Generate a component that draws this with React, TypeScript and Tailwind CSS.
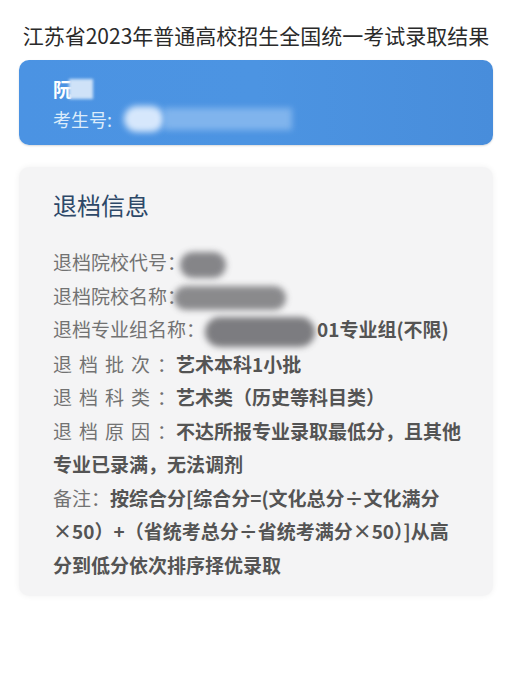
import React from 'react';

const cjk = { fontFamily: '"Noto Sans CJK SC", "Noto Sans", sans-serif' };

// smudge used to hide personal data, like in the screenshot
const Smudge = ({ className }: { className: string }) => (
    <span className={`inline-block align-middle rounded-full blur-[3px] ${className}`} />
);

const Row = ({ children }: { children: React.ReactNode }) => (
    <p className="text-[19px] leading-[33.5px] text-[#727272]">{children}</p>
);

const Val = ({ children }: { children: React.ReactNode }) => (
    <span className="font-bold text-[#545454]">{children}</span>
);

export default function App() {
    return (
        <div className="w-[512px] h-[680px] bg-white px-[19px] pt-[19px]" style={cjk}>
            {/* Title */}
            <h1 className="text-[21px] leading-[32px] text-[#2a2a2a] text-center whitespace-nowrap">
                江苏省2023年普通高校招生全国统一考试录取结果
            </h1>

            {/* Candidate card */}
            <div className="mt-[9px] h-[85px] rounded-[10px] bg-gradient-to-r from-[#4b93e3] via-[#4c94e2] to-[#488ddb] pl-[34px] pt-[14px] shadow-[0_1px_2px_rgba(0,0,0,0.15)]">
                <div className="flex items-center h-[30px]">
                    <span className="text-[19px] font-bold text-white">阮</span>
                    <span className="inline-block w-[24px] h-[20px] bg-[#cfe2f8] blur-[1.5px] -ml-[3px]" />
                </div>
                <div className="flex items-center h-[30px] text-[18px] text-[#dcecfb]">
                    <span>考生号:</span>
                    <span className="ml-[12px] flex items-center">
                        <span className="inline-block w-[40px] h-[26px] bg-[#e6f1ff] rounded-full blur-[3px] opacity-90" />
                        <span className="inline-block w-[128px] h-[22px] bg-[#8ebdf0] blur-[3px] opacity-80" />
                    </span>
                </div>
            </div>

            {/* Info card */}
            <div className="mt-[22px] h-[429px] rounded-[10px] bg-[#f4f4f5] shadow-[0_0_6px_rgba(0,0,0,0.06)] pl-[34px] pr-[26px] pt-[20px]">
                <h2 className="text-[24px] leading-[36px] text-[#2d4868]">退档信息</h2>
                <div className="mt-[22px]">
                    <Row>
                        退档院校代号：
                        <Smudge className="w-[46px] h-[26px] bg-[#6a6a6e] opacity-80 -ml-[6px]" />
                    </Row>
                    <Row>
                        退档院校名称：
                        <Smudge className="w-[112px] h-[24px] bg-[#707073] opacity-80 -ml-[12px]" />
                    </Row>
                    <Row>
                        退档专业组名称：
                        <Smudge className="w-[110px] h-[30px] bg-[#5f5f63] opacity-80 mr-[2px]" />
                        <Val>01专业组(不限)</Val>
                    </Row>
                    <Row>
                        <span className="tracking-[7px]">退档批次</span>：<Val>艺术本科1小批</Val>
                    </Row>
                    <Row>
                        <span className="tracking-[7px]">退档科类</span>：<Val>艺术类（历史等科目类）</Val>
                    </Row>
                    <Row>
                        <span className="tracking-[7px]">退档原因</span>：<Val>不达所报专业录取最低分，且其他<br />专业已录满，无法调剂</Val>
                    </Row>
                    <Row>
                        备注：<Val>按综合分[综合分=(文化总分÷文化满分<br />×50）+（省统考总分÷省统考满分×50）]从高<br />分到低分依次排序择优录取</Val>
                    </Row>
                </div>
            </div>
        </div>
    );
}
